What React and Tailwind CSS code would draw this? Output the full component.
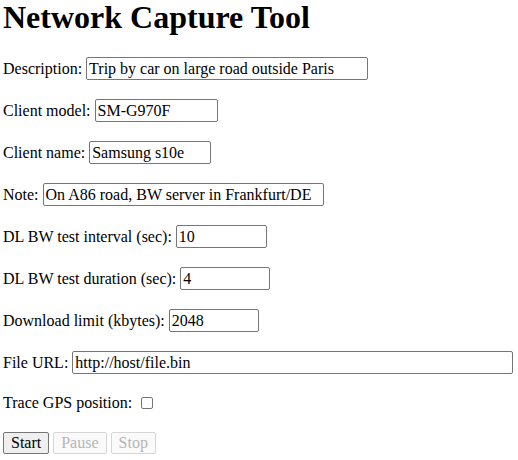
export default function App() {
  const inputCls =
    "ml-1 h-[23px] border border-[#767676] rounded-[2px] px-[2px] text-[16px] text-black bg-white outline-none";
  const rows = [
    ["Description:", "Trip by car on large road outside Paris", "w-[282px]"],
    ["Client model:", "SM-G970F", "w-[123px]"],
    ["Client name:", "Samsung s10e", "w-[122px]"],
    ["Note:", "On A86 road, BW server in Frankfurt/DE", "w-[281px]"],
    ["DL BW test interval (sec):", "10", "w-[91px]"],
    ["DL BW test duration (sec):", "4", "w-[90px]"],
    ["Download limit (kbytes):", "2048", "w-[90px]"],
    ["File URL:", "http://host/file.bin", "w-[441px]"],
  ];
  return (
    <div
      className="w-[518px] h-[460px] bg-white text-black text-[16px] pl-[3px] overflow-hidden"
      style={{ fontFamily: '"Liberation Serif", "Times New Roman", serif' }}
    >
      <h1 className="text-[32px] font-bold leading-[35px] h-[35px] mb-[22px]">
        Network Capture Tool
      </h1>
      <div className="flex flex-col gap-[19px]">
        {rows.map(([label, value, w]) => (
          <div key={label} className="flex items-center h-[23px]">
            <span className="whitespace-pre">{label}</span>
            <input
              type="text"
              defaultValue={value}
              className={`${inputCls} ${w}`}
              style={{ fontFamily: '"Liberation Serif", "Times New Roman", serif' }}
            />
          </div>
        ))}
        <div className="flex items-center h-[20px]">
          <span>Trace GPS position:</span>
          <input
            type="checkbox"
            className="appearance-none ml-[9px] w-[12px] h-[12px] border border-[#767676] rounded-[2px] bg-white"
          />
        </div>
        <div className="flex items-center h-[22px] gap-1">
          <button className="h-[22px] px-[7px] border border-[#767676] rounded-[2px] bg-[#efefef] text-black leading-none">
            Start
          </button>
          <button
            disabled
            className="h-[22px] px-[7px] border border-[#d6d6d6] rounded-[2px] bg-[#fafafa] text-[#b5b5b5] leading-none"
          >
            Pause
          </button>
          <button
            disabled
            className="h-[22px] px-[7px] border border-[#d6d6d6] rounded-[2px] bg-[#fafafa] text-[#b5b5b5] leading-none"
          >
            Stop
          </button>
        </div>
      </div>
    </div>
  );
}
